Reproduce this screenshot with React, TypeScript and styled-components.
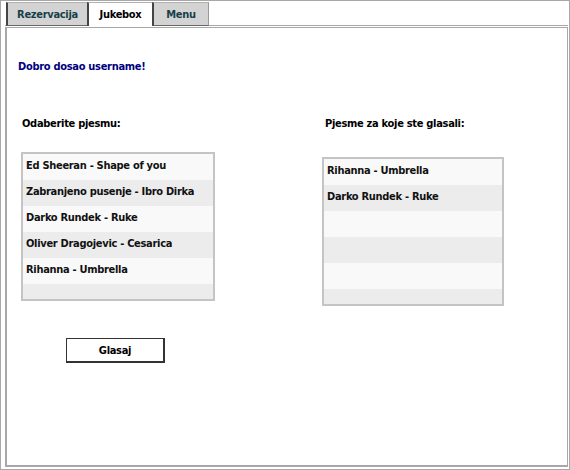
import React from 'react'
import styled, { createGlobalStyle } from 'styled-components'

const GlobalStyle = createGlobalStyle`
  html, body {
    margin: 0;
    padding: 0;
    background: #fff;
  }
  body {
    font-family: 'DejaVu Sans Condensed', 'DejaVu Sans', sans-serif;
    font-size: 11px;
    letter-spacing: -0.3px;
  }
`

const Frame = styled.div`
  width: 570px;
  height: 470px;
  box-sizing: border-box;
  border: 1px solid #a8a8a8;
  padding: 0 1px 2px 4px;
  display: flex;
  flex-direction: column;
`

const TabBar = styled.div`
  height: 25px;
  box-sizing: border-box;
  display: flex;
  padding-left: 1px;
  padding-top: 1px;
  border-bottom: 1px solid #a8a8a8;
  margin-bottom: 1px;
`

const Tab = styled.div<{ $active?: boolean; $width: number }>`
  box-sizing: border-box;
  width: ${({ $width }) => $width}px;
  height: 24px;
  border-top: 1px solid #b0b0b0;
  border-left: 2px solid #444;
  border-bottom: ${({ $active }) => ($active ? 'none' : '1px solid #666')};
  background: ${({ $active }) => ($active ? '#fff' : '#d3d3d3')};
  color: ${({ $active }) => ($active ? '#000' : '#183f48')};
  font-weight: bold;
  font-size: 11px;
  display: flex;
  align-items: center;
  justify-content: center;

  &:last-child {
    border-right: 1px solid #999;
  }
`

const Panel = styled.div`
  flex: 1;
  border-top: 1px solid #a8a8a8;
  border-right: 1px solid #a8a8a8;
  border-left: 2px solid #a8a8a8;
  border-bottom: 2px solid #a8a8a8;
  padding: 0 0 0 10px;
`

const Welcome = styled.div`
  color: #000080;
  font-weight: bold;
  line-height: 15px;
  margin-top: 31px;
  margin-left: 1px;
`

const Columns = styled.div`
  display: flex;
  margin-top: 42px;
`

const Column = styled.div<{ $width: number; $offset: number }>`
  width: ${({ $width }) => $width}px;
  margin-left: ${({ $offset }) => $offset}px;
  display: flex;
  flex-direction: column;
`

const Heading = styled.div<{ $indent: number }>`
  font-weight: bold;
  line-height: 15px;
  color: #000;
  margin-left: ${({ $indent }) => $indent}px;
`

const ListBox = styled.div<{ $top: number }>`
  margin-top: ${({ $top }) => $top}px;
  border: 2px solid #c4c4c4;
  height: 149px;
  box-sizing: border-box;
  overflow: hidden;
  display: flex;
  flex-direction: column;
`

const Row = styled.div<{ $odd: boolean }>`
  height: 26px;
  flex-shrink: 0;
  box-sizing: border-box;
  padding-left: 3px;
  padding-bottom: 4px;
  display: flex;
  align-items: center;
  white-space: nowrap;
  background: ${({ $odd }) => ($odd ? '#ececec' : '#f9f9f9')};
  font-weight: bold;
  color: #111;
`

const ButtonRow = styled.div`
  margin-top: 37px;
  margin-left: 45px;
`

const Button = styled.button`
  width: 99px;
  height: 25px;
  box-sizing: border-box;
  background: #fff;
  border: 1px solid #333;
  border-right-width: 2px;
  border-bottom-width: 2px;
  font-family: inherit;
  font-weight: bold;
  font-size: 11px;
  letter-spacing: -0.3px;
  color: #000;
  padding: 0;
`

const songs = [
  'Ed Sheeran - Shape of you',
  'Zabranjeno pusenje - Ibro Dirka',
  'Darko Rundek - Ruke',
  'Oliver Dragojevic - Cesarica',
  'Rihanna - Umbrella',
  '',
]

const voted = ['Rihanna - Umbrella', 'Darko Rundek - Ruke', '', '', '', '']

export default function App() {
  return (
    <>
      <GlobalStyle />
      <Frame>
        <TabBar>
          <Tab $width={81}>Rezervacija</Tab>
          <Tab $active $width={65}>Jukebox</Tab>
          <Tab $width={57}>Menu</Tab>
        </TabBar>
        <Panel>
          <Welcome>Dobro dosao username!</Welcome>
          <Columns>
            <Column $width={194} $offset={4}>
              <Heading $indent={1}>Odaberite pjesmu:</Heading>
              <ListBox $top={21}>
                {songs.map((s, i) => (
                  <Row key={i} $odd={i % 2 === 1}>{s}</Row>
                ))}
              </ListBox>
              <ButtonRow>
                <Button>Glasaj</Button>
              </ButtonRow>
            </Column>
            <Column $width={182} $offset={107}>
              <Heading $indent={3}>Pjesme za koje ste glasali:</Heading>
              <ListBox $top={26}>
                {voted.map((s, i) => (
                  <Row key={i} $odd={i % 2 === 1}>{s}</Row>
                ))}
              </ListBox>
            </Column>
          </Columns>
        </Panel>
      </Frame>
    </>
  )
}
